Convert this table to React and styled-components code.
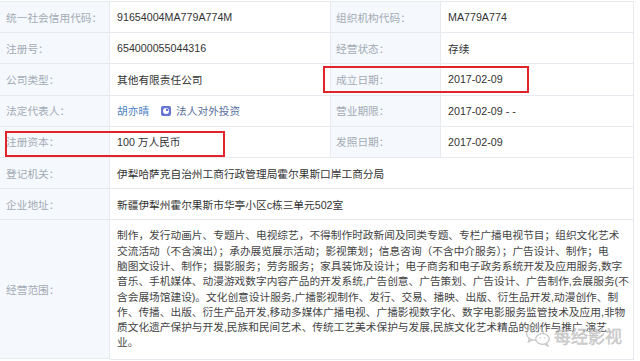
import React from "react";
import styled, { createGlobalStyle } from "styled-components";

const Global = createGlobalStyle`
  html, body { margin: 0; padding: 0; background: #fff; }
  body { font-family: "Liberation Sans", "Noto Sans CJK SC", sans-serif; }
`;

const Page = styled.div`
  position: relative;
  width: 640px;
  height: 361px;
  overflow: hidden;
  padding-top: 1px;
  box-sizing: border-box;
`;

const Table = styled.div`
  display: grid;
  grid-template-columns: 110px 221px 110px 193px;
  width: 634px;
  border-top: 1px solid #e7ebf0;
  font-size: 10.7px;
`;

const Label = styled.div`
  box-sizing: border-box;
  height: ${(p) => (p.$tall ? "139px" : "31.2px")};
  display: flex;
  align-items: center;
  padding-left: ${(p) => (p.$second ? "5px" : "6px")};
  background: #f5f8fc;
  color: #a3abb5;
  border-right: 1px solid #e7ebf0;
  border-bottom: 1px solid #e7ebf0;
  white-space: nowrap;
`;

const Value = styled.div`
  box-sizing: border-box;
  height: 31.2px;
  display: flex;
  align-items: center;
  gap: 6px;
  padding-left: 7px;
  color: #333;
  border-right: 1px solid #e7ebf0;
  border-bottom: 1px solid #e7ebf0;
  white-space: nowrap;
  grid-column: ${(p) => (p.$wide ? "span 3" : "auto")};
`;

const Scope = styled.div`
  box-sizing: border-box;
  grid-column: span 3;
  padding: 8px 0 8px 7px;
  color: #444;
  line-height: 15.3px;
  border-right: 1px solid #e7ebf0;
  border-bottom: 1px solid #e7ebf0;
`;

const Line = styled.div`
  white-space: nowrap;
`;

const Link = styled.span`
  color: #4d82c4;
`;

const Invest = styled.span`
  display: inline-flex;
  align-items: center;
  gap: 5px;
  color: #5a6f9c;
  margin-left: 6px;
`;

const RedBox = styled.div`
  position: absolute;
  border: 2px solid #e0242a;
  box-sizing: border-box;
  pointer-events: none;
`;

const Watermark = styled.div`
  position: absolute;
  left: 525px;
  top: 323px;
  display: flex;
  align-items: center;
  gap: 3px;
  opacity: 0.75;
`;

const WmText = styled.span`
  font-family: "Noto Sans CJK SC", sans-serif;
  font-size: 17px;
  color: #c2c2c2;
  -webkit-text-stroke: 0.4px #a8a8a8;
`;

const InvestIcon = () => (
  <svg width="10" height="10" viewBox="0 0 10 10">
    <rect x="0" y="0" width="10" height="10" rx="2" fill="#6775d3" />
    <circle cx="5" cy="5" r="3" fill="#fff" />
    <path d="M5 5 L5 2.6 A2.4 2.4 0 0 1 7.4 5 Z" fill="#6775d3" />
  </svg>
);

const WeChat = () => (
  <svg width="26" height="22" viewBox="0 0 26 22" fill="none" stroke="#b5b5b5" strokeWidth="1.3">
    <ellipse cx="10" cy="8.5" rx="8.5" ry="6.8" />
    <path d="M4.5 13.5 L3.5 17 L7.5 14.8" />
    <ellipse cx="17.5" cy="14" rx="6.8" ry="5.4" fill="#fff" />
    <path d="M21.5 18.5 L23 21 L19.5 19.2" />
    <circle cx="7" cy="7" r="0.9" fill="#b5b5b5" stroke="none" />
    <circle cx="12.5" cy="7" r="0.9" fill="#b5b5b5" stroke="none" />
    <circle cx="15.3" cy="13" r="0.7" fill="#b5b5b5" stroke="none" />
    <circle cx="19.8" cy="13" r="0.7" fill="#b5b5b5" stroke="none" />
  </svg>
);

const scopeLines = [
  "制作，发行动画片、专题片、电视综艺，不得制作时政新闻及同类专题、专栏广播电视节目；组织文化艺术",
  "交流活动（不含演出）；承办展览展示活动；影视策划；信息咨询（不含中介服务）；广告设计、制作；电",
  "脑图文设计、制作；摄影服务；劳务服务；家具装饰及设计；电子商务和电子政务系统开发及应用服务,数字",
  "音乐、手机媒体、动漫游戏数字内容产品的开发系统,广告创意、广告策划、广告设计、广告制作,会展服务(不",
  "含会展场馆建设)。文化创意设计服务,广播影视制作、发行、交易、播映、出版、衍生品开发,动漫创作、制",
  "作、传播、出版、衍生产品开发,移动多媒体广播电视、广播影视数字化、数字电影服务监管技术及应用,非物",
  "质文化遗产保护与开发,民族和民间艺术、传统工艺美术保护与发展,民族文化艺术精品的创作与推广,演艺",
  "业。",
];

export default function App() {
  return (
    <>
      <Global />
      <Page>
        <Table>
          <Label>统一社会信用代码：</Label>
          <Value>91654004MA779A774M</Value>
          <Label $second>组织机构代码：</Label>
          <Value>MA779A774</Value>

          <Label>注册号：</Label>
          <Value>654000055044316</Value>
          <Label $second>经营状态：</Label>
          <Value>存续</Value>

          <Label>公司类型：</Label>
          <Value>其他有限责任公司</Value>
          <Label $second>成立日期：</Label>
          <Value>2017-02-09</Value>

          <Label>法定代表人：</Label>
          <Value>
            <Link>胡亦晴</Link>
            <Invest>
              <InvestIcon />
              法人对外投资
            </Invest>
          </Value>
          <Label $second>营业期限：</Label>
          <Value>2017-02-09 - -</Value>

          <Label>注册资本：</Label>
          <Value>100 万人民币</Value>
          <Label $second>发照日期：</Label>
          <Value>2017-02-09</Value>

          <Label>登记机关：</Label>
          <Value $wide>伊犁哈萨克自治州工商行政管理局霍尔果斯口岸工商分局</Value>

          <Label>企业地址：</Label>
          <Value $wide>新疆伊犁州霍尔果斯市华亭小区c栋三单元502室</Value>

          <Label $tall>经营范围：</Label>
          <Scope>
            {scopeLines.map((l, i) => (
              <Line key={i}>{l}</Line>
            ))}
          </Scope>
        </Table>

        <RedBox style={{ left: 323, top: 66, width: 206, height: 27 }} />
        <RedBox style={{ left: 5, top: 131, width: 220, height: 26 }} />

        <Watermark>
          <WeChat />
          <WmText>每经影视</WmText>
        </Watermark>
      </Page>
    </>
  );
}
